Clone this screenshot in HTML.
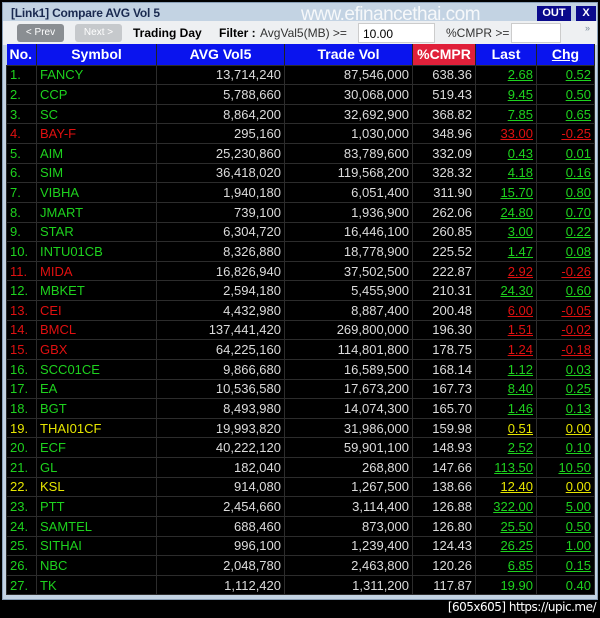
<!DOCTYPE html><html><head><meta charset="utf-8"><style>
*{margin:0;padding:0;box-sizing:border-box}
body{width:600px;height:618px;background:#000;position:relative;overflow:hidden;font-family:"Liberation Sans",Arial,sans-serif}
#win{position:absolute;left:2px;top:2px;width:596px;height:598px;background:#c3d3e3;border:1px solid #8aa0b8}
#title{position:absolute;left:8px;top:3px;font-size:12px;font-weight:bold;color:#1a2a50;letter-spacing:-0.2px}
#wm{position:absolute;left:298px;top:1px;font-size:19px;color:#fff;opacity:.85;letter-spacing:-0.5px}
.tb{position:absolute;top:3px;height:15px;background:#0a0a8c;color:#fff;font-size:11px;font-weight:bold;text-align:center;line-height:15px}
#tool{position:absolute;left:0;top:18px;width:594px;height:24px;background:#eef0f2;font-size:12px}
.btn{position:absolute;top:3px;height:18px;border-radius:3px;font-size:10px;color:#fff;text-align:center;line-height:18px}
.t{position:absolute;top:5px;white-space:nowrap}
.inp{position:absolute;top:2px;height:20px;background:#fff;border:1px solid #ccc;padding:3px 4px;font-size:12px}
table{position:absolute;left:3px;top:41px;width:588px;border-collapse:collapse;table-layout:fixed;font-size:13px}
th{height:21px;background:#0a14ee;color:#fff;font-weight:bold;font-size:14px;border-right:1px solid #222}
td{height:19.63px;background:#000;color:#dcdcdc;border:1px solid #2c2c2c;padding:0 3px;white-space:nowrap;overflow:hidden;text-align:right;line-height:17px}
td.n,td.s{text-align:left}
.g td.n,.g td.s,.g td.l,.g td.c{color:#1ed21e}
.y td.n,.y td.s,.y td.l,.y td.c{color:#e6e600}
.r td.n,.r td.s,.r td.l,.r td.c{color:#e01010}
td.l,td.c{text-decoration:underline}
#foot{position:absolute;right:4px;top:600px;color:#fff;font-size:12px;font-family:"DejaVu Sans",sans-serif;letter-spacing:-0.5px}
</style></head><body>
<div id="win">
<div id="title">[Link1] Compare AVG Vol 5</div>
<div id="wm">www.efinancethai.com</div>
<div class="tb" style="left:534px;width:34px">OUT</div>
<div class="tb" style="left:573px;width:20px">X</div>
<div id="tool">
<div class="btn" style="left:14px;width:47px;background:#8a8e92">&lt; Prev</div>
<div class="btn" style="left:72px;width:47px;background:#c6c9cc">Next &gt;</div>
<div class="t" style="left:130px;font-weight:bold">Trading Day</div>
<div class="t" style="left:216px;font-weight:bold">Filter :</div>
<div class="t" style="left:257px;color:#333">AvgVal5(MB) &gt;=</div>
<div class="inp" style="left:355px;width:77px">10.00</div>
<div class="t" style="left:443px;color:#333">%CMPR &gt;=</div>
<div class="inp" style="left:508px;width:50px"></div>
<div class="t" style="left:582px;top:2px;font-size:9px;color:#789">»</div>
</div>
<table>
<colgroup><col style="width:30px"><col style="width:120px"><col style="width:128px"><col style="width:128px"><col style="width:63px"><col style="width:61px"><col style="width:58px"></colgroup>
<tr><th style="text-align:left;padding-left:3px">No.</th><th>Symbol</th><th>AVG Vol5</th><th>Trade Vol</th><th style="background:#e0203a">%CMPR</th><th>Last</th><th style="text-decoration:underline">Chg</th></tr>
<tr class="g"><td class="n">1.</td><td class="s">FANCY</td><td>13,714,240</td><td>87,546,000</td><td>638.36</td><td class="l">2.68</td><td class="c">0.52</td></tr>
<tr class="g"><td class="n">2.</td><td class="s">CCP</td><td>5,788,660</td><td>30,068,000</td><td>519.43</td><td class="l">9.45</td><td class="c">0.50</td></tr>
<tr class="g"><td class="n">3.</td><td class="s">SC</td><td>8,864,200</td><td>32,692,900</td><td>368.82</td><td class="l">7.85</td><td class="c">0.65</td></tr>
<tr class="r"><td class="n">4.</td><td class="s">BAY-F</td><td>295,160</td><td>1,030,000</td><td>348.96</td><td class="l">33.00</td><td class="c">-0.25</td></tr>
<tr class="g"><td class="n">5.</td><td class="s">AIM</td><td>25,230,860</td><td>83,789,600</td><td>332.09</td><td class="l">0.43</td><td class="c">0.01</td></tr>
<tr class="g"><td class="n">6.</td><td class="s">SIM</td><td>36,418,020</td><td>119,568,200</td><td>328.32</td><td class="l">4.18</td><td class="c">0.16</td></tr>
<tr class="g"><td class="n">7.</td><td class="s">VIBHA</td><td>1,940,180</td><td>6,051,400</td><td>311.90</td><td class="l">15.70</td><td class="c">0.80</td></tr>
<tr class="g"><td class="n">8.</td><td class="s">JMART</td><td>739,100</td><td>1,936,900</td><td>262.06</td><td class="l">24.80</td><td class="c">0.70</td></tr>
<tr class="g"><td class="n">9.</td><td class="s">STAR</td><td>6,304,720</td><td>16,446,100</td><td>260.85</td><td class="l">3.00</td><td class="c">0.22</td></tr>
<tr class="g"><td class="n">10.</td><td class="s">INTU01CB</td><td>8,326,880</td><td>18,778,900</td><td>225.52</td><td class="l">1.47</td><td class="c">0.08</td></tr>
<tr class="r"><td class="n">11.</td><td class="s">MIDA</td><td>16,826,940</td><td>37,502,500</td><td>222.87</td><td class="l">2.92</td><td class="c">-0.26</td></tr>
<tr class="g"><td class="n">12.</td><td class="s">MBKET</td><td>2,594,180</td><td>5,455,900</td><td>210.31</td><td class="l">24.30</td><td class="c">0.60</td></tr>
<tr class="r"><td class="n">13.</td><td class="s">CEI</td><td>4,432,980</td><td>8,887,400</td><td>200.48</td><td class="l">6.00</td><td class="c">-0.05</td></tr>
<tr class="r"><td class="n">14.</td><td class="s">BMCL</td><td>137,441,420</td><td>269,800,000</td><td>196.30</td><td class="l">1.51</td><td class="c">-0.02</td></tr>
<tr class="r"><td class="n">15.</td><td class="s">GBX</td><td>64,225,160</td><td>114,801,800</td><td>178.75</td><td class="l">1.24</td><td class="c">-0.18</td></tr>
<tr class="g"><td class="n">16.</td><td class="s">SCC01CE</td><td>9,866,680</td><td>16,589,500</td><td>168.14</td><td class="l">1.12</td><td class="c">0.03</td></tr>
<tr class="g"><td class="n">17.</td><td class="s">EA</td><td>10,536,580</td><td>17,673,200</td><td>167.73</td><td class="l">8.40</td><td class="c">0.25</td></tr>
<tr class="g"><td class="n">18.</td><td class="s">BGT</td><td>8,493,980</td><td>14,074,300</td><td>165.70</td><td class="l">1.46</td><td class="c">0.13</td></tr>
<tr class="y"><td class="n">19.</td><td class="s">THAI01CF</td><td>19,993,820</td><td>31,986,000</td><td>159.98</td><td class="l">0.51</td><td class="c">0.00</td></tr>
<tr class="g"><td class="n">20.</td><td class="s">ECF</td><td>40,222,120</td><td>59,901,100</td><td>148.93</td><td class="l">2.52</td><td class="c">0.10</td></tr>
<tr class="g"><td class="n">21.</td><td class="s">GL</td><td>182,040</td><td>268,800</td><td>147.66</td><td class="l">113.50</td><td class="c">10.50</td></tr>
<tr class="y"><td class="n">22.</td><td class="s">KSL</td><td>914,080</td><td>1,267,500</td><td>138.66</td><td class="l">12.40</td><td class="c">0.00</td></tr>
<tr class="g"><td class="n">23.</td><td class="s">PTT</td><td>2,454,660</td><td>3,114,400</td><td>126.88</td><td class="l">322.00</td><td class="c">5.00</td></tr>
<tr class="g"><td class="n">24.</td><td class="s">SAMTEL</td><td>688,460</td><td>873,000</td><td>126.80</td><td class="l">25.50</td><td class="c">0.50</td></tr>
<tr class="g"><td class="n">25.</td><td class="s">SITHAI</td><td>996,100</td><td>1,239,400</td><td>124.43</td><td class="l">26.25</td><td class="c">1.00</td></tr>
<tr class="g"><td class="n">26.</td><td class="s">NBC</td><td>2,048,780</td><td>2,463,800</td><td>120.26</td><td class="l">6.85</td><td class="c">0.15</td></tr>
<tr class="g"><td class="n">27.</td><td class="s">TK</td><td>1,112,420</td><td>1,311,200</td><td>117.87</td><td class="l" style="text-decoration:none">19.90</td><td class="c" style="text-decoration:none">0.40</td></tr>
</table>
</div>
<div id="foot">[605x605] https://upic.me/</div>
</body></html>
